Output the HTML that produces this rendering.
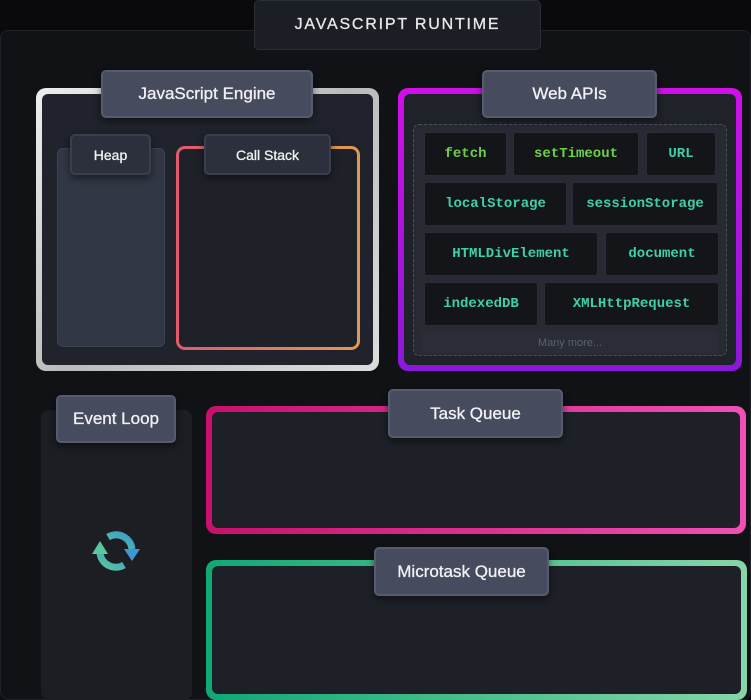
<!DOCTYPE html>
<html><head><style>
*{margin:0;padding:0;box-sizing:border-box}
body{width:751px;height:688px;background:#0a0a0c;position:relative;overflow:hidden;font-family:"Liberation Sans",sans-serif}
.a{position:absolute}
.lbl{position:absolute;background:#464b5e;border:2px solid #565c70;border-radius:5px;color:#f2f2f4;font-size:17px;display:flex;align-items:center;justify-content:center;box-shadow:0 3px 8px rgba(0,0,0,.5);-webkit-text-stroke:0.3px #f2f2f4}
.sl{background:#2c303c;border-color:#3a3f4e;font-size:14px}
.c{position:absolute;background:#141519;border:1px solid #2a2d36;border-radius:3px;color:#3fd0a8;font-family:"Liberation Mono",monospace;font-size:14px;display:flex;align-items:center;justify-content:center;font-weight:bold}
.g{color:#6cd04a}
</style></head><body>
<div class="a" style="left:0;top:30px;width:751px;height:670px;background:#111215;border:1px solid #1f2127;border-radius:8px"></div>
<div class="a" style="left:254px;top:0;width:287px;height:50px;background:#1b1e25;border:1px solid #2a2e37;border-radius:5px;color:#e8e8ea;font-size:16px;letter-spacing:1.8px;display:flex;align-items:center;justify-content:center;-webkit-text-stroke:0.3px #e8e8ea">JAVASCRIPT RUNTIME</div>

<div class="a" style="left:36px;top:88px;width:343px;height:283px;border-radius:10px;background:linear-gradient(135deg,#eee,#bbb 50%,#ddd);padding:6px"><div style="width:100%;height:100%;background:#21232c;border-radius:6px"></div></div>
<div class="a" style="left:57px;top:148px;width:108px;height:199px;background:#323746;border:1px solid #3c4252;border-radius:6px"></div>
<div class="lbl sl" style="left:70px;top:134px;width:81px;height:41px">Heap</div>
<div class="a" style="left:176px;top:146px;width:184px;height:204px;border-radius:9px;background:linear-gradient(90deg,#e05a6c,#e09a50);padding:3px"><div style="width:100%;height:100%;background:#1f2129;border-radius:6px"></div></div>
<div class="lbl sl" style="left:204px;top:134px;width:127px;height:41px">Call Stack</div>
<div class="lbl" style="left:101px;top:70px;width:212px;height:48px">JavaScript Engine</div>

<div class="a" style="left:398px;top:88px;width:344px;height:283px;border-radius:10px;background:linear-gradient(180deg,#d010e8,#8a18d8);padding:6px"><div style="width:100%;height:100%;background:#20222a;border-radius:6px"></div></div>
<div class="a" style="left:413px;top:124px;width:314px;height:232px;border:1.5px dashed #4a4e5c;border-radius:6px;background:#272a33"></div>
<div class="c g" style="left:424px;top:132px;width:83px;height:44px">fetch</div>
<div class="c g" style="left:513px;top:132px;width:126px;height:44px">setTimeout</div>
<div class="c" style="left:646px;top:132px;width:70px;height:44px">URL</div>
<div class="c" style="left:424px;top:182px;width:143px;height:44px">localStorage</div>
<div class="c" style="left:572px;top:182px;width:146px;height:44px">sessionStorage</div>
<div class="c" style="left:424px;top:232px;width:174px;height:44px">HTMLDivElement</div>
<div class="c" style="left:605px;top:232px;width:114px;height:44px">document</div>
<div class="c" style="left:424px;top:282px;width:114px;height:44px">indexedDB</div>
<div class="c" style="left:544px;top:282px;width:175px;height:44px">XMLHttpRequest</div>
<div class="a" style="left:422px;top:331px;width:296px;height:23px;background:#2a2d36;border-radius:3px;color:#5c606c;font-size:11px;display:flex;align-items:center;justify-content:center">Many more...</div>
<div class="lbl" style="left:482px;top:70px;width:175px;height:48px">Web APIs</div>

<div class="a" style="left:41px;top:410px;width:151px;height:290px;background:#1c1e24;border-radius:8px"></div>
<div class="lbl" style="left:56px;top:395px;width:120px;height:48px">Event Loop</div>
<svg class="a" style="left:86px;top:524px" width="60" height="54" viewBox="0 0 60 54">
<defs><linearGradient id="rg" x1="0" y1="1" x2="1" y2="0"><stop offset="0" stop-color="#5cc79a"/><stop offset="1" stop-color="#3a9ad0"/></linearGradient></defs>
<g fill="none" stroke="url(#rg)" stroke-width="7">
<path d="M22 13 A16 16 0 0 1 46 25"/><path d="M38 41 A16 16 0 0 1 14 29"/></g>
<path d="M38 25 L54 25 L46 37 Z" fill="#3a9ad0"/><path d="M6 30 L22 30 L14 17 Z" fill="#5cc79a"/>
</svg>

<div class="a" style="left:206px;top:406px;width:540px;height:128px;border-radius:10px;background:linear-gradient(90deg,#c8106c,#f050b4);padding:6px"><div style="width:100%;height:100%;background:#1e2028;border-radius:6px"></div></div>
<div class="lbl" style="left:388px;top:389px;width:175px;height:49px">Task Queue</div>
<div class="a" style="left:206px;top:560px;width:541px;height:140px;border-radius:10px;background:linear-gradient(90deg,#10a874,#88d4a8);padding:6px"><div style="width:100%;height:100%;background:#1e2028;border-radius:6px"></div></div>
<div class="lbl" style="left:374px;top:547px;width:175px;height:49px">Microtask Queue</div>
</body></html>
